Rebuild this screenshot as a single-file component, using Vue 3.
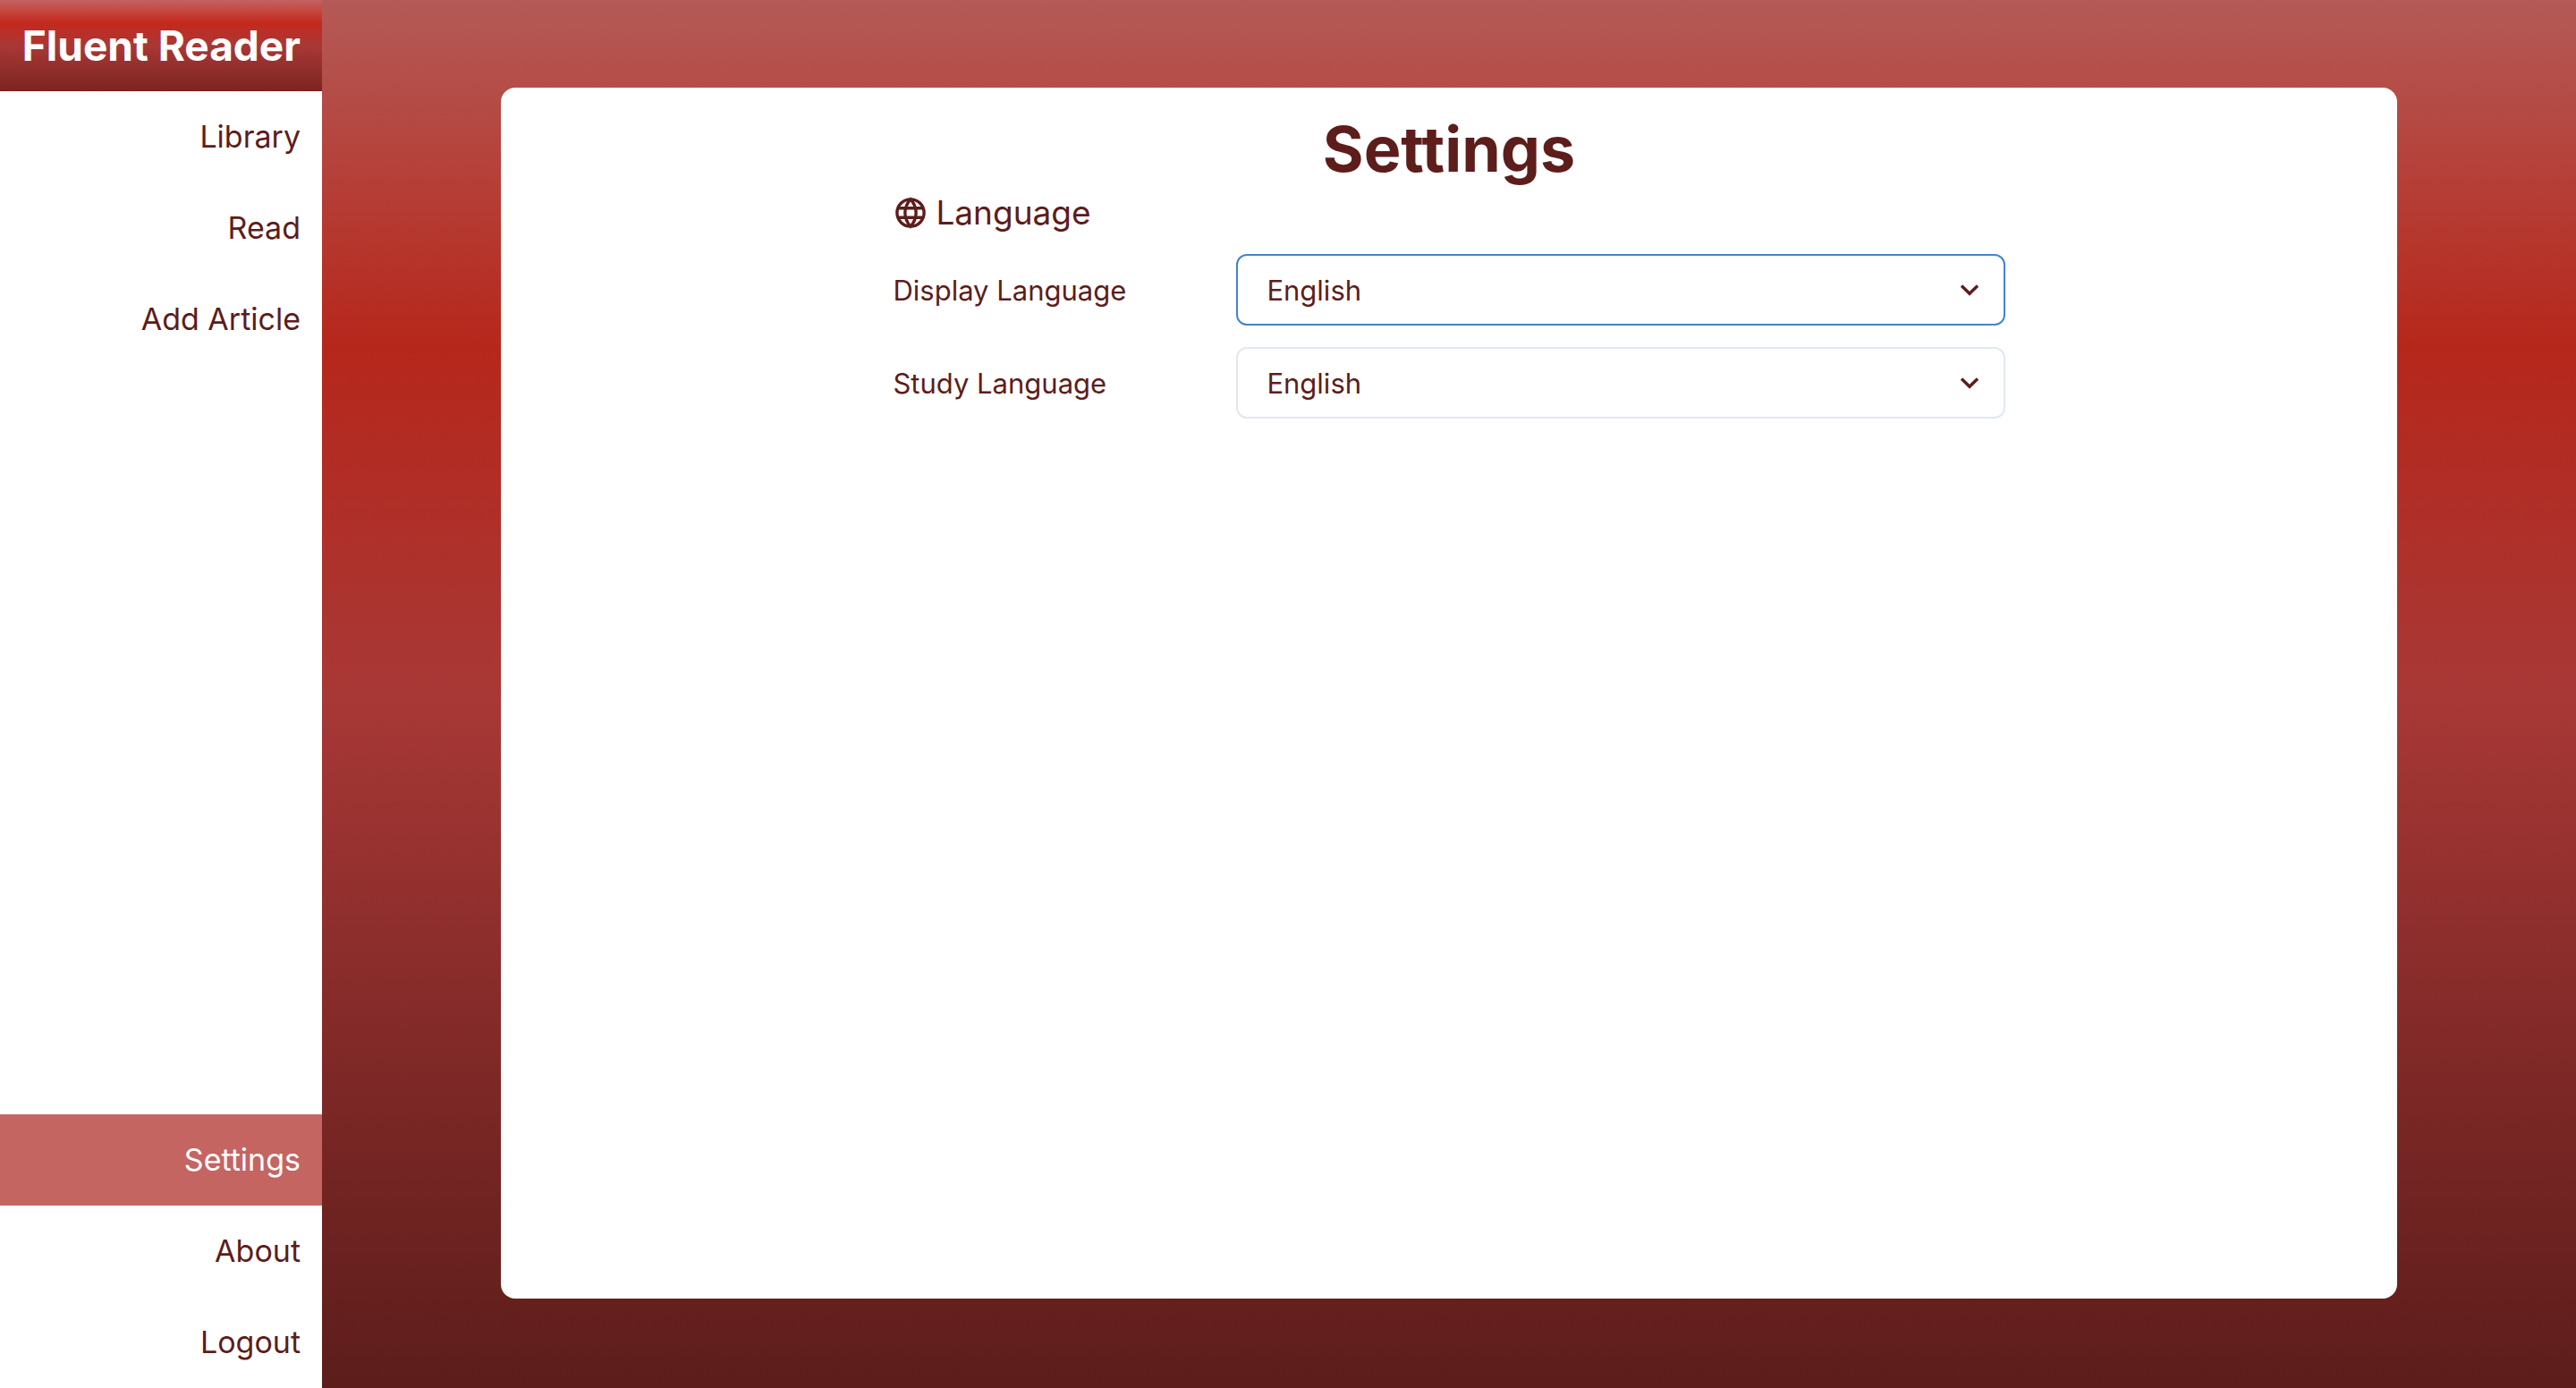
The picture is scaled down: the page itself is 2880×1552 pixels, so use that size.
<script setup>
import { ref } from 'vue'

const mainLinks = ['Library', 'Read', 'Add Article']
const accountLinks = ['Settings', 'About', 'Logout']
const current = 'Settings'

const languages = ['English', 'Chinese', 'French', 'Spanish']
const fields = ref([
  { id: 'display-language', label: 'Display Language', value: 'English', active: true },
  { id: 'study-language', label: 'Study Language', value: 'English', active: false },
])
</script>

<template>
  <div class="layout">
    <aside class="sidebar">
      <div class="brand">Fluent Reader</div>
      <nav class="nav">
        <a v-for="name in mainLinks" :key="name" href="#" class="nav-link">{{ name }}</a>
        <div class="spacer"></div>
        <a
          v-for="name in accountLinks"
          :key="name"
          href="#"
          class="nav-link"
          :class="{ current: name === current }"
        >{{ name }}</a>
      </nav>
    </aside>

    <main class="content">
      <section class="card">
        <h1 class="title">Settings</h1>
        <form class="form">
          <h2 class="group">
            <svg class="globe" viewBox="0 0 40 40" aria-hidden="true">
              <g fill="none" stroke="currentColor" stroke-width="3.4">
                <circle cx="20" cy="20" r="15.1" />
                <path d="M20 4.9C11.8 14 11.8 26 20 35.1C28.2 26 28.2 14 20 4.9Z" />
                <path d="M6 14.8H34M6 25.2H34" />
              </g>
            </svg>
            <span>Language</span>
          </h2>
          <div v-for="field in fields" :key="field.id" class="row">
            <label class="label" :for="field.id">{{ field.label }}</label>
            <div class="select-wrap">
              <select :id="field.id" v-model="field.value" class="select" :class="{ active: field.active }">
                <option v-for="lang in languages" :key="lang">{{ lang }}</option>
              </select>
              <svg class="chevron" viewBox="0 0 24 24" aria-hidden="true">
                <path d="M3 7.5L12 16.3L21 7.5" fill="none" stroke="currentColor" stroke-width="3.4" />
              </svg>
            </div>
          </div>
        </form>
      </section>
    </main>
  </div>
</template>

<style>
body {
  margin: 0;
}
</style>

<style scoped>
.layout {
  display: flex;
  min-height: 100vh;
  box-sizing: border-box;
  color: #5d1d1b;
  font-family: Inter, "Liberation Sans", sans-serif;
}

.sidebar {
  display: flex;
  flex-direction: column;
  flex: 0 0 360px;
  background: #fff;
}

.brand {
  padding: 0 24px;
  background: linear-gradient(#c46260 0%, #c5291d 25%, #a83836 50%, #7c2422 100%);
  color: #fff;
  font-size: 46px;
  font-weight: 700;
  line-height: 102px;
  text-align: right;
  white-space: nowrap;
}

.nav {
  display: flex;
  flex: 1;
  flex-direction: column;
}

.spacer {
  flex: 1;
}

.nav-link {
  padding: 0 24px;
  color: inherit;
  font-size: 34px;
  line-height: 102px;
  text-align: right;
  text-decoration: none;
}

.nav-link.current {
  background: #c46562;
  color: #fff;
}

.content {
  display: flex;
  flex: 1;
  padding: 98px 200px 100px;
  background: linear-gradient(#b45a57 0%, #b6271b 25%, #a83836 50%, #7a2725 80%, #5c1d1b 100%);
}

.card {
  display: flex;
  flex: 1;
  flex-direction: column;
  align-items: center;
  padding: 24px;
  border-radius: 16px;
  background: #fff;
}

.title {
  margin: 0;
  font-size: 70px;
  font-weight: 700;
  line-height: 90px;
}

.form {
  display: flex;
  flex-direction: column;
  gap: 24px;
  width: 60%;
  max-width: 1244px;
}

.group {
  display: flex;
  align-items: center;
  gap: 8px;
  margin: 0;
  padding-top: 4px;
  font-size: 37px;
  font-weight: 400;
  line-height: 44px;
}

.globe {
  width: 40px;
  height: 40px;
}

.row {
  display: flex;
  align-items: center;
}

.label {
  flex: 0 0 384px;
  font-size: 31px;
}

.select-wrap {
  position: relative;
  flex: 1;
}

.select {
  display: block;
  width: 100%;
  height: 80px;
  box-sizing: border-box;
  padding: 0 64px 0 32px;
  appearance: none;
  border: 2px solid #e2e8f0;
  border-radius: 12px;
  background: #fff;
  color: inherit;
  font-family: inherit;
  font-size: 31px;
}

.select.active {
  border-color: #4582ce;
}

.chevron {
  position: absolute;
  top: 28px;
  right: 28px;
  width: 24px;
  height: 24px;
  pointer-events: none;
}
</style>
